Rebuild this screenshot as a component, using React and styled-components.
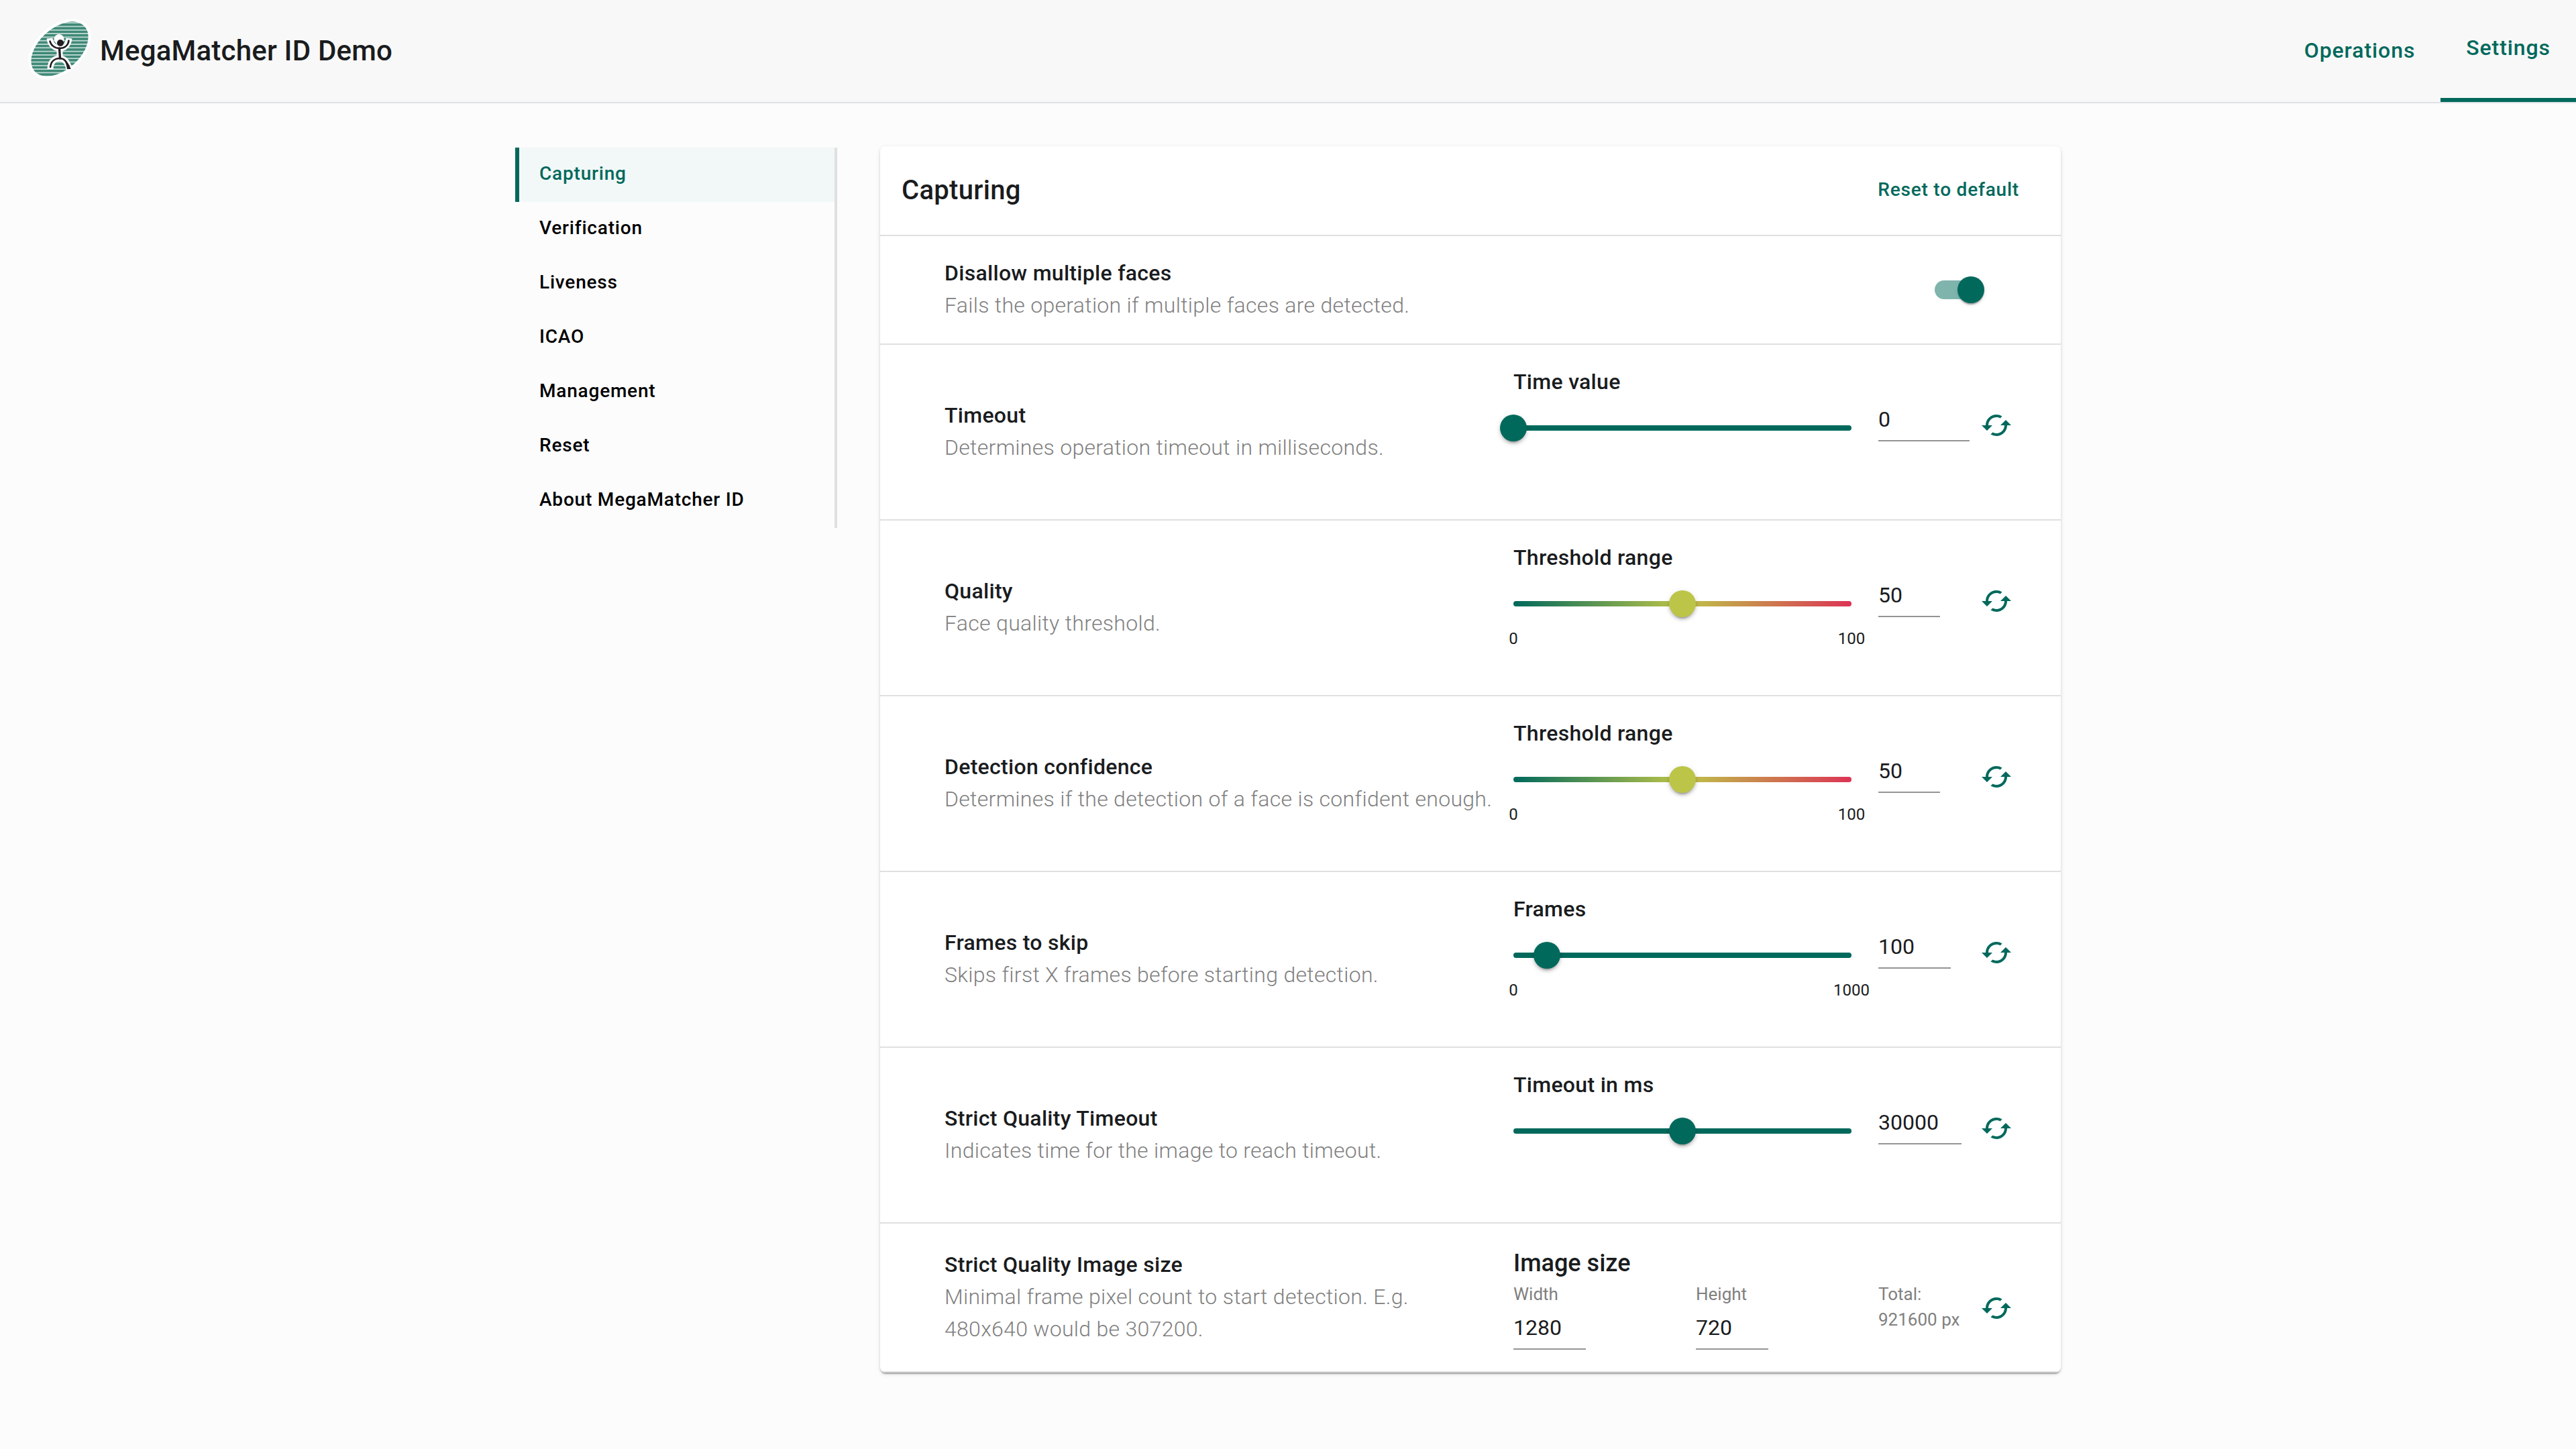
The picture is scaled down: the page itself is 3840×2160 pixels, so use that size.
import React, { useState } from 'react'
import styled, { createGlobalStyle, ThemeProvider } from 'styled-components'
import { MdCached } from 'react-icons/md'

const theme = {
  primary: '#00695c',
  primarySoft: '#f2f8f8',
  mid: '#bdc548',
  danger: '#dc3455',
  text: '#1a1c1e',
  muted: '#808080',
  line: '#e0e0e0',
}

const GlobalStyle = createGlobalStyle`
  * {
    box-sizing: border-box;
  }
  body {
    margin: 0;
    min-height: 100vh;
    background: #fcfcfc;
    color: ${theme.text};
    font-family: Roboto, "Liberation Sans", sans-serif;
    font-size: 32px;
    line-height: 48px;
    letter-spacing: 0.00938em;
  }
  button, input {
    font: inherit;
    color: inherit;
  }
`

const Header = styled.header`
  display: flex;
  justify-content: space-between;
  height: 154px;
  padding-left: 40px;
  background: #f8f8f8;
  border-bottom: 2px solid #dee2e6;
`

const Brand = styled.div`
  display: flex;
  align-items: center;
  gap: 13px;
  font-size: 42px;
  font-weight: 500;
  letter-spacing: 0.005em;

  svg {
    width: 96px;
    height: 96px;
  }
`

const Nav = styled.nav`
  display: flex;
`

const NavLink = styled.a`
  display: flex;
  align-items: center;
  padding: 0 38px ${props => (props.$active ? 4 : 2)}px;
  border-bottom: ${props => (props.$active ? `6px solid ${props.theme.primary}` : 'none')};
  color: ${props => props.theme.primary};
  font-weight: 500;
  letter-spacing: 0.02857em;
  text-decoration: none;
`

const Page = styled.div`
  display: grid;
  grid-template-columns: 480px minmax(0, 1fr);
  align-items: start;
  gap: 64px;
  padding: 64px 20%;
`

const Sidebar = styled.nav`
  display: flex;
  flex-direction: column;
  margin-top: 2px;
  border-right: 4px solid ${props => props.theme.line};
`

const SidebarLink = styled.a`
  padding: 14px 16px 18px 30px;
  border-left: 6px solid ${props => (props.$active ? props.theme.primary : 'transparent')};
  background: ${props => (props.$active ? props.theme.primarySoft : 'transparent')};
  color: ${props => (props.$active ? props.theme.primary : '#000')};
  font-size: 28px;
  font-weight: 500;
  line-height: 49px;
  letter-spacing: 0.02857em;
  text-decoration: none;
`

const Card = styled.main`
  overflow: hidden;
  border-radius: 8px;
  background: #fff;
  box-shadow: 0 4px 2px -2px rgba(0, 0, 0, 0.2), 0 2px 2px rgba(0, 0, 0, 0.14), 0 2px 6px rgba(0, 0, 0, 0.12);
`

const CardHeader = styled.div`
  display: flex;
  align-items: center;
  justify-content: space-between;
  padding: 32px 46px 32px 32px;
  border-bottom: 2px solid ${props => props.theme.line};
`

const CardTitle = styled.h1`
  margin: 0;
  font-size: 40px;
  font-weight: 500;
  line-height: 68px;
  letter-spacing: 0.0075em;
`

const ResetButton = styled.button`
  padding: 10px 16px 12px;
  border: 0;
  background: none;
  color: ${props => props.theme.primary};
  font-size: 28px;
  font-weight: 500;
  letter-spacing: 0.02857em;
  line-height: 46px;
  cursor: pointer;
`

const Row = styled.section`
  display: grid;
  grid-template-columns: minmax(0, 1fr) minmax(0, 1fr);
  align-items: center;
  gap: 32px;
  padding: 30px 0 32px 96px;
  border-bottom: 2px solid ${props => props.theme.line};
`

// long descriptions may run slightly into the gap
const RowText = styled.div`
  margin-right: -4px;
`

const Name = styled.h2`
  margin: 0;
  font-size: 32px;
  font-weight: 500;
`

const Description = styled.p`
  margin: 0;
  color: ${props => props.theme.muted};
  font-weight: 300;
`

const Controls = styled.div`
  display: grid;
  grid-template-columns: 2fr 2fr 1fr 1fr;
  align-items: start;
`

const ControlLabel = styled.label`
  grid-column: 1 / -1;
  padding: 1px 0;
  font-weight: 500;
`

const GroupTitle = styled.h3`
  grid-column: 1 / -1;
  margin: 0;
  padding-top: 2px;
  font-size: 36px;
  font-weight: 500;
  line-height: 54px;
  letter-spacing: normal;
`

const SliderBox = styled.div`
  grid-column: span 2;
  display: grid;
  align-content: start;
  height: 148px;
  padding-top: 24px;
  margin-right: 40px;
`

const Rail = styled.div`
  grid-area: 1 / 1;
  align-self: center;
  height: 8px;
  border-radius: 4px;
  background: ${({ theme, $gradient }) =>
    $gradient
      ? `linear-gradient(90deg, ${theme.primary}, ${theme.mid}, ${theme.danger})`
      : theme.primary};
`

// wider than the rail by half a thumb on each side
const Range = styled.input`
  grid-area: 1 / 1;
  height: 40px;
  margin: 0 -20px;
  appearance: none;
  background: none;
  cursor: pointer;

  &::-webkit-slider-thumb {
    appearance: none;
    width: 40px;
    height: 40px;
    border-radius: 50%;
    background: ${({ theme, $gradient }) => ($gradient ? theme.mid : theme.primary)};
    box-shadow: 0 6px 2px -4px rgba(0, 0, 0, 0.2), 0 4px 4px rgba(0, 0, 0, 0.14), 0 2px 10px rgba(0, 0, 0, 0.12);
  }
`

const Marks = styled.div`
  display: flex;
  justify-content: space-between;
  margin: 14px -40px 0;
  font-size: 24px;
  line-height: 36px;
  letter-spacing: normal;

  span {
    width: 80px;
    text-align: center;
  }
`

const NumberInput = styled.input`
  width: ${props => props.$width}px;
  height: 64px;
  padding: 9px 0;
  border: 0;
  border-bottom: 2px solid #949494;
  border-radius: 0;
  background: none;
  appearance: textfield;

  &::-webkit-inner-spin-button {
    appearance: none;
    margin: 0;
  }
`

const IconButton = styled.button`
  display: flex;
  justify-self: start;
  padding: 16px;
  border: 0;
  border-radius: 50%;
  background: none;
  color: ${props => props.theme.primary};
  font-size: 48px;
  cursor: pointer;
`

const Field = styled.label`
  display: flex;
  flex-direction: column;
  color: ${props => props.theme.muted};
  font-size: 26px;
  line-height: 38px;
  letter-spacing: normal;
  white-space: nowrap;

  input {
    color: ${props => props.theme.text};
    font-size: 32px;
  }
`

const Total = styled(Field).attrs({ as: 'div' })``

const Switch = styled.input`
  justify-self: end;
  display: flex;
  align-items: center;
  width: 74px;
  height: 40px;
  margin: 30px 114px 28px 0;
  appearance: none;
  cursor: pointer;

  /* track */
  &::before {
    content: '';
    width: 68px;
    height: 28px;
    border-radius: 14px;
    background: ${props => props.theme.primary};
    opacity: 0.5;
  }

  /* thumb */
  &::after {
    content: '';
    flex: none;
    width: 40px;
    height: 40px;
    margin-left: -34px;
    border-radius: 50%;
    background: ${props => props.theme.primary};
    box-shadow: 0 4px 2px -2px rgba(0, 0, 0, 0.2), 0 2px 2px rgba(0, 0, 0, 0.14), 0 2px 6px rgba(0, 0, 0, 0.12);
  }

  &:not(:checked)::after {
    margin-left: -74px;
  }
`

const Logo = () => (
  <svg viewBox="0 0 96 96" aria-hidden="true">
    <defs>
      <pattern
        id="stripes"
        width="96"
        height="5.3"
        patternUnits="userSpaceOnUse"
        patternTransform="rotate(42 49 45)"
      >
        <rect width="96" height="5.3" fill="#3f8877" />
        <rect width="96" height="1.7" fill="#c3ddd6" />
      </pattern>
    </defs>
    <ellipse
      cx="49"
      cy="45"
      rx="50"
      ry="31"
      transform="rotate(-42 49 45)"
      fill="url(#stripes)"
      stroke="#fff"
      strokeWidth="8"
      paintOrder="stroke"
    />
    <g fill="none" stroke="#fff" strokeWidth="9">
      <path d="M34 29C35 39 42 44 49 44C56 44 62 39 63 29" />
      <path d="M49 44V59" />
      <path d="M35 75C35 64 41 59 49 59C57 59 61 66 63 75" />
    </g>
    <circle cx="48" cy="30.5" r="7.5" fill="#fff" />
    <g fill="none" stroke="#231f20" strokeWidth="2.6" strokeLinecap="round">
      <path d="M34.5 33.5C36 40 42 44 49 44C56 44 61.5 40 62.5 32.5" />
      <path d="M48.5 44L49.5 59" strokeWidth="3.4" />
      <path d="M35 72C36 64 41 59 49 59C56 59 60 64 62 73" />
    </g>
    <path d="M55 61C60 64 64 68 65.5 75H60C59 69 58 65 55 61Z" fill="#231f20" />
    <circle cx="50" cy="36" r="5" fill="#231f20" />
  </svg>
)

const sections = ['Capturing', 'Verification', 'Liveness', 'ICAO', 'Management', 'Reset', 'About MegaMatcher ID']

const sliders = [
  {
    id: 'timeout',
    name: 'Timeout',
    description: 'Determines operation timeout in milliseconds.',
    label: 'Time value',
    initial: 0,
    max: 60000,
    width: 136,
  },
  {
    id: 'quality',
    name: 'Quality',
    description: 'Face quality threshold.',
    label: 'Threshold range',
    initial: 50,
    max: 100,
    width: 92,
    marks: true,
    gradient: true,
  },
  {
    id: 'confidence',
    name: 'Detection confidence',
    description: 'Determines if the detection of a face is confident enough.',
    label: 'Threshold range',
    initial: 50,
    max: 100,
    width: 92,
    marks: true,
    gradient: true,
  },
  {
    id: 'frames',
    name: 'Frames to skip',
    description: 'Skips first X frames before starting detection.',
    label: 'Frames',
    initial: 100,
    max: 1000,
    width: 108,
    marks: true,
  },
  {
    id: 'strict-timeout',
    name: 'Strict Quality Timeout',
    description: 'Indicates time for the image to reach timeout.',
    label: 'Timeout in ms',
    initial: 30000,
    max: 60000,
    width: 124,
  },
]

const SliderRow = ({ id, name, description, label, initial, max, width, marks, gradient }) => {
  const [value, setValue] = useState(initial)
  const onChange = e => setValue(e.target.value)

  return (
    <Row>
      <RowText>
        <Name>{name}</Name>
        <Description>{description}</Description>
      </RowText>
      <Controls>
        <ControlLabel htmlFor={id}>{label}</ControlLabel>
        <SliderBox>
          <Rail $gradient={gradient} />
          <Range id={id} type="range" min="0" max={max} value={value} onChange={onChange} $gradient={gradient} />
          {marks && (
            <Marks>
              <span>0</span>
              <span>{max}</span>
            </Marks>
          )}
        </SliderBox>
        <NumberInput type="number" aria-label={`${name} value`} value={value} onChange={onChange} $width={width} />
        <IconButton type="button" aria-label={`Reset ${name}`} onClick={() => setValue(initial)}>
          <MdCached />
        </IconButton>
      </Controls>
    </Row>
  )
}

const ImageSizeRow = () => {
  const [width, setWidth] = useState(1280)
  const [height, setHeight] = useState(720)

  const reset = () => {
    setWidth(1280)
    setHeight(720)
  }

  return (
    <Row>
      <RowText>
        <Name>Strict Quality Image size</Name>
        <Description>Minimal frame pixel count to start detection. E.g. 480x640 would be 307200.</Description>
      </RowText>
      <Controls>
        <GroupTitle>Image size</GroupTitle>
        <Field>
          Width
          <NumberInput type="number" value={width} onChange={e => setWidth(e.target.value)} $width={108} />
        </Field>
        <Field>
          Height
          <NumberInput type="number" value={height} onChange={e => setHeight(e.target.value)} $width={108} />
        </Field>
        <Total>
          <span>Total:</span>
          <span>{width * height} px</span>
        </Total>
        <IconButton type="button" aria-label="Reset image size" onClick={reset}>
          <MdCached />
        </IconButton>
      </Controls>
    </Row>
  )
}

const App = () => {
  const [single, setSingle] = useState(true)

  return (
    <ThemeProvider theme={theme}>
      <GlobalStyle />
      <Header>
        <Brand>
          <Logo />
          <span>MegaMatcher ID Demo</span>
        </Brand>
        <Nav>
          <NavLink href="#operations">Operations</NavLink>
          <NavLink href="#settings" $active>Settings</NavLink>
        </Nav>
      </Header>
      <Page>
        <Sidebar>
          {sections.map((section, i) => (
            <SidebarLink key={section} href={`#section-${i}`} $active={i === 0}>
              {section}
            </SidebarLink>
          ))}
        </Sidebar>
        <Card>
          <CardHeader>
            <CardTitle>Capturing</CardTitle>
            <ResetButton type="button">Reset to default</ResetButton>
          </CardHeader>
          <Row>
            <RowText>
              <Name as="label" htmlFor="single-face">Disallow multiple faces</Name>
              <Description>Fails the operation if multiple faces are detected.</Description>
            </RowText>
            <Switch
              id="single-face"
              type="checkbox"
              role="switch"
              checked={single}
              onChange={e => setSingle(e.target.checked)}
            />
          </Row>
          {sliders.map(slider => (
            <SliderRow key={slider.id} {...slider} />
          ))}
          <ImageSizeRow />
        </Card>
      </Page>
    </ThemeProvider>
  )
}

export default App
